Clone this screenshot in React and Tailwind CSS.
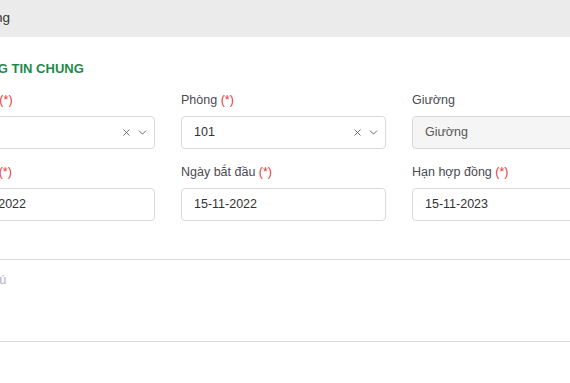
import { X, ChevronDown } from "lucide-react";

const font = { fontFamily: '"Liberation Sans", Arial, sans-serif' };

function Label({ text, required }) {
  return (
    <div className="mb-[7px] h-[18px] text-[12.5px] leading-[18px] text-[#4a4a52] whitespace-nowrap">
      {text}
      {required && <span className="text-[#e5383b]"> (*)</span>}
    </div>
  );
}

function SelectBox({ value }) {
  return (
    <div className="flex h-[33px] items-center rounded-[4px] border border-[#d9d9d9] bg-white pl-3 pr-[5px] text-[12.5px] text-[#333]">
      <span className="flex-1 truncate">{value}</span>
      <X size={11} strokeWidth={2} className="mr-[4px] text-[#666]" />
      <ChevronDown size={13} strokeWidth={1.8} className="text-[#666]" />
    </div>
  );
}

function InputBox({ value, disabled }) {
  return (
    <div
      className={`flex h-[33px] items-center rounded-[4px] border border-[#d9d9d9] px-3 text-[12.5px] ${
        disabled ? "bg-[#f5f5f5] text-[#555]" : "bg-white text-[#333]"
      }`}
    >
      {value}
    </div>
  );
}

export default function App() {
  return (
    <div className="w-[570px] h-[383px] overflow-hidden bg-white" style={font}>
      <div className="-ml-[70px] w-[710px]">
        <div className="flex h-[37px] items-center bg-[#ebebeb] px-5 text-[13.5px] text-[#333]">
          Hợp đồng
        </div>

        <div className="px-5 pt-[23px]">
          <h2 className="mb-[13px] ml-[11px] text-[13px] font-bold leading-[18px] text-[#1e8a4a]">
            THÔNG TIN CHUNG
          </h2>

          <div className="grid grid-cols-[205px_205px_205px] gap-x-[26px] gap-y-[14px]">
            <div>
              <Label text="Tòa nhà" required />
              <SelectBox value="A1" />
            </div>
            <div>
              <Label text="Phòng" required />
              <SelectBox value="101" />
            </div>
            <div>
              <Label text="Giường" />
              <InputBox value="Giường" disabled />
            </div>

            <div>
              <Label text="Ngày ký" required />
              <InputBox value="15-11-2022" />
            </div>
            <div>
              <Label text="Ngày bắt đầu" required />
              <InputBox value="15-11-2022" />
            </div>
            <div>
              <Label text="Hạn hợp đồng" required />
              <InputBox value="15-11-2023" />
            </div>

            <div className="col-span-3 mt-[24px]">
              <textarea
                placeholder="Ghi chú"
                className="block h-[83px] w-full resize-none rounded-[4px] border border-[#d9d9d9] px-3 py-[11px] text-[12.5px] leading-[18px] text-[#333] outline-none placeholder:text-[#b0b0b8]"
              />
            </div>
          </div>
        </div>
      </div>
    </div>
  );
}
